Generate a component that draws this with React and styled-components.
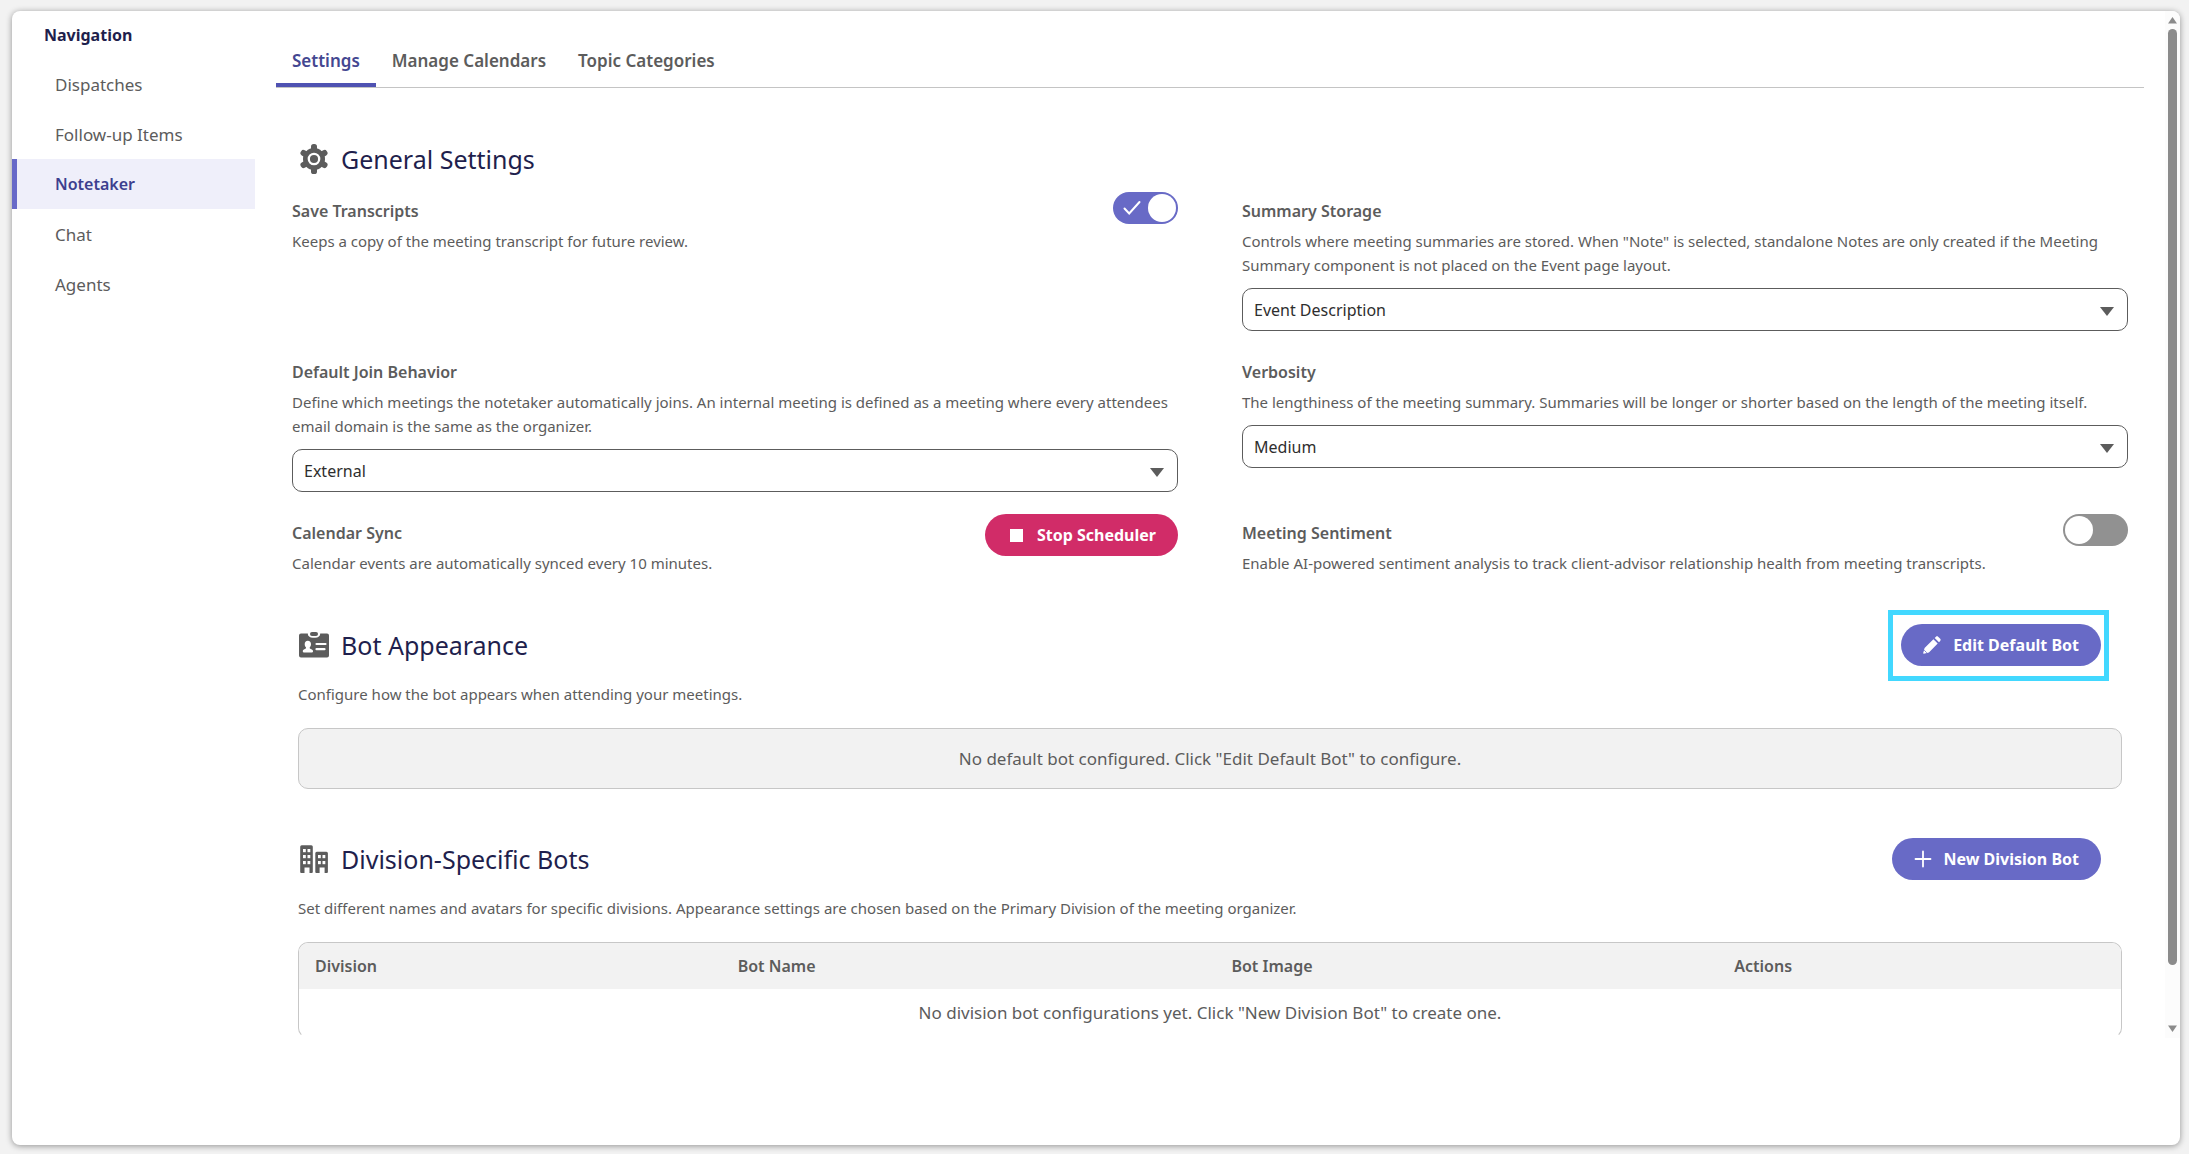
import React, { useState } from "react";
import styled, { createGlobalStyle, css } from "styled-components";

const navItems = ["Dispatches", "Follow-up Items", "Notetaker", "Chat", "Agents"];
const tabs = ["Settings", "Manage Calendars", "Topic Categories"];
const columns = [
    { name: "Division", width: "23.2%" },
    { name: "Bot Name", width: "27.1%" },
    { name: "Bot Image", width: "27.6%" },
    { name: "Actions", width: "22.1%" },
];

function GearIcon() {
    return (
        <svg width="30" height="30" viewBox="0 0 30 30" fill="#5c5c5c" aria-hidden="true">
            <circle cx="15" cy="15" r="11" />
            {[0, 60, 120].map(angle => (
                <rect key={angle} x="12" y="0" width="6" height="30" rx="2.6" transform={`rotate(${angle} 15 15)`} />
            ))}
            <circle cx="15" cy="15" r="5.2" stroke="#fff" strokeWidth="2.3" />
        </svg>
    );
}

function BadgeIcon() {
    return (
        <svg width="30" height="30" viewBox="0 1 30 30" aria-hidden="true">
            <path
                fill="#5c5c5c"
                d="M2 4.500h6.800a5 4 0 0 0 5 4.300h2.400a5 4 0 0 0 5-4.300H28a2 2 0 0 1 2 2v20a2 2 0 0 1-2 2H2a2 2 0 0 1-2-2v-20a2 2 0 0 1 2-2z"
            />
            <rect x="11" y="3" width="8" height="4" rx="2" fill="#5c5c5c" />
            <path
                fill="#fff"
                d="M8.800 11.800c2 0 3.200 1.500 3.200 3.400 0 1.300-.6 2.200-1.200 3-.3.600-.1 1.200.5 1.500 1.500.6 2.700 1.200 2.700 2.400v.5a.8.8 0 0 1-.8.800H4.600a.8.800 0 0 1-.8-.8v-.5c0-1.200 1.100-1.800 2.600-2.400.6-.3.800-.9.500-1.500-.7-.8-1.200-1.700-1.200-3 0-1.900 1.100-3.400 3.100-3.400z"
            />
            <path stroke="#fff" strokeWidth="2.2" strokeLinecap="round" d="M17.500 15h9M17.500 20.200h8" />
        </svg>
    );
}

function BuildingsIcon() {
    const windows = [
        [4, 5], [8.5, 5], [4, 11], [8.5, 11], [4, 17], [8.5, 17],
        [19, 11], [23.5, 11], [19, 17], [23.5, 17],
    ];
    return (
        <svg width="30" height="30" viewBox="0 0 30 30" aria-hidden="true">
            <path
                fill="#5c5c5c"
                d="M2.700 1.300h9.600A1.500 1.500 0 0 1 13.800 2.800V28a1 1 0 0 1-1 1h-2.300v-5.500h-5V29H2.200a1 1 0 0 1-1-1V2.800a1.500 1.500 0 0 1 1.500-1.500zM17.800 7.700h9.600a1.500 1.500 0 0 1 1.500 1.500V28a1 1 0 0 1-1 1h-2.300v-5.500h-5V29h-3.300a1 1 0 0 1-1-1V9.200a1.500 1.500 0 0 1 1.500-1.500z"
            />
            {windows.map(([x, y]) => (
                <rect key={`${x}-${y}`} x={x} y={y} width="2.800" height="3.200" fill="#fff" />
            ))}
        </svg>
    );
}

function PencilIcon() {
    return (
        <svg width="18" height="18" viewBox="0 0 18 18" fill="#fff" aria-hidden="true">
            <path d="M1.600 12.100L10.400 3.300l4.300 4.300-8.800 8.800L.9 17.800c-.4.100-.8-.3-.7-.700zM11.700 2l1.300-1.300c.6-.6 1.500-.6 2.100 0l2.100 2.100c.6.600.6 1.500 0 2.100L16 6.300z" />
            <path d="M1.200 14.200l2.600 2.600" stroke="#686ac6" strokeWidth="0.800" />
        </svg>
    );
}

function PlusIcon() {
    return (
        <svg width="18" height="18" viewBox="0 0 18 18" aria-hidden="true">
            <path d="M9 1.500v15M1.500 9h15" stroke="#fff" strokeWidth="1.800" strokeLinecap="round" />
        </svg>
    );
}

function StopIcon() {
    return (
        <svg width="18" height="18" viewBox="0 0 18 18" aria-hidden="true">
            <rect x="3" y="3" width="13" height="13" fill="#fff" />
        </svg>
    );
}

function Toggle({ id, defaultChecked }) {
    const [checked, setChecked] = useState(defaultChecked);

    return (
        <ToggleWrap>
            <ToggleInput id={id} type="checkbox" checked={checked} onChange={e => setChecked(e.target.checked)} />
            {checked && (
                <ToggleCheck width="18" height="16" viewBox="0 0 18 16" aria-hidden="true">
                    <path d="M1.500 8.500l4.700 5L16.500 2" fill="none" stroke="#fff" strokeWidth="2" strokeLinecap="round" />
                </ToggleCheck>
            )}
        </ToggleWrap>
    );
}

function SelectField({ id, options }) {
    return (
        <SelectWrap>
            <Select id={id}>
                {options.map(option => <option key={option}>{option}</option>)}
            </Select>
            <Caret width="14" height="9" viewBox="0 0 14 9" aria-hidden="true">
                <path d="M0 0h14L7 9z" fill="#5c5c5c" />
            </Caret>
        </SelectWrap>
    );
}

function Setting({ id, label, description, control, children }) {
    return (
        <Cell>
            <CellText>
                <Label htmlFor={id}>{label}</Label>
                <Description>{description}</Description>
                {children}
            </CellText>
            {control}
        </Cell>
    );
}

function App() {
    const [tab, setTab] = useState("Settings");

    return (
        <>
            <GlobalStyle />
            <Card>
                <Sidebar>
                    <NavTitle>Navigation</NavTitle>
                    {navItems.map(item => (
                        <NavLink href="#" key={item} $active={item === "Notetaker"}>{item}</NavLink>
                    ))}
                </Sidebar>

                <ScrollArea>
                    <Main>
                        <TabBar role="tablist">
                            {tabs.map(name => (
                                <Tab key={name} role="tab" aria-selected={tab === name} $active={tab === name} onClick={() => setTab(name)}>
                                    {name}
                                </Tab>
                            ))}
                        </TabBar>

                        <SectionHeader $first>
                            <GearIcon />
                            <SectionTitle>General Settings</SectionTitle>
                        </SectionHeader>

                        <SettingsGrid>
                            <Setting
                                id="save-transcripts"
                                label="Save Transcripts"
                                description="Keeps a copy of the meeting transcript for future review."
                                control={<Toggle id="save-transcripts" defaultChecked />}
                            />
                            <Setting
                                id="summary-storage"
                                label="Summary Storage"
                                description={'Controls where meeting summaries are stored. When "Note" is selected, standalone Notes are only created if the Meeting Summary component is not placed on the Event page layout.'}
                            >
                                <SelectField id="summary-storage" options={["Event Description", "Note"]} />
                            </Setting>
                            <Setting
                                id="join-behavior"
                                label="Default Join Behavior"
                                description="Define which meetings the notetaker automatically joins. An internal meeting is defined as a meeting where every attendees email domain is the same as the organizer."
                            >
                                <SelectField id="join-behavior" options={["External", "Internal", "All"]} />
                            </Setting>
                            <Setting
                                id="verbosity"
                                label="Verbosity"
                                description="The lengthiness of the meeting summary. Summaries will be longer or shorter based on the length of the meeting itself."
                            >
                                <SelectField id="verbosity" options={["Medium", "Short", "Long"]} />
                            </Setting>
                            <Setting
                                id="calendar-sync"
                                label="Calendar Sync"
                                description="Calendar events are automatically synced every 10 minutes."
                                control={<Button id="calendar-sync" $danger><StopIcon />Stop Scheduler</Button>}
                            />
                            <Setting
                                id="meeting-sentiment"
                                label="Meeting Sentiment"
                                description="Enable AI-powered sentiment analysis to track client-advisor relationship health from meeting transcripts."
                                control={<Toggle id="meeting-sentiment" defaultChecked={false} />}
                            />
                        </SettingsGrid>

                        <Section>
                            <SectionHeader>
                                <BadgeIcon />
                                <SectionTitle>Bot Appearance</SectionTitle>
                                <Highlighted>
                                    <Button><PencilIcon />Edit Default Bot</Button>
                                </Highlighted>
                            </SectionHeader>
                            <SectionText>Configure how the bot appears when attending your meetings.</SectionText>
                            <EmptyBox>No default bot configured. Click "Edit Default Bot" to configure.</EmptyBox>
                        </Section>

                        <Section>
                            <SectionHeader>
                                <BuildingsIcon />
                                <SectionTitle>Division-Specific Bots</SectionTitle>
                                <Button><PlusIcon />New Division Bot</Button>
                            </SectionHeader>
                            <SectionText>
                                Set different names and avatars for specific divisions. Appearance settings are chosen based on the Primary Division of the meeting organizer.
                            </SectionText>
                            <TableFrame>
                                <Table>
                                    <thead>
                                        <tr>
                                            {columns.map(({ name, width }) => <th key={name} scope="col" width={width}>{name}</th>)}
                                        </tr>
                                    </thead>
                                    <tbody>
                                        <tr>
                                            <td colSpan={4}>No division bot configurations yet. Click "New Division Bot" to create one.</td>
                                        </tr>
                                    </tbody>
                                </Table>
                            </TableFrame>
                        </Section>
                    </Main>

                    <ScrollRail aria-hidden="true">
                        <svg width="9" height="7" viewBox="0 0 9 7"><path d="M4.500 0L9 6.500H0z" fill="#8b8b8b" /></svg>
                        <ScrollTrack><ScrollThumb /></ScrollTrack>
                        <svg width="9" height="7" viewBox="0 0 9 7"><path d="M0 .5h9L4.500 7z" fill="#8b8b8b" /></svg>
                    </ScrollRail>
                </ScrollArea>
            </Card>
        </>
    );
}

export default App;

const GlobalStyle = createGlobalStyle`
    * {
        box-sizing: border-box;
    }

    body {
        margin: 0;
        background: #f2f2f2;
        color: #5c5c5c;
        font-family: 'Noto Sans', 'Open Sans', sans-serif;
        font-size: 16px;
    }

    button, select {
        font-family: inherit;
        font-size: inherit;
    }
`;

const Card = styled.div`
    display: flex;
    align-items: flex-start;
    min-height: calc(100vh - 20px);
    margin: 11px 9px 9px 12px;
    background: #fff;
    border-radius: 8px;
    box-shadow: 0 1px 6px rgba(0, 0, 0, 0.4);
`;

const Sidebar = styled.nav`
    display: flex;
    flex-direction: column;
    flex: 0 0 243px;
`;

const NavTitle = styled.h2`
    margin: 0;
    padding: 12px 32px;
    color: #1f1f4d;
    font-size: 16px;
    line-height: 24px;
    font-weight: 700;
`;

const NavLink = styled.a`
    padding: 1px 38px 0;
    border-left: 5px solid ${({ $active }) => ($active ? "#6769c8" : "transparent")};
    background: ${({ $active }) => ($active ? "#efeffa" : "transparent")};
    color: ${({ $active }) => ($active ? "#3d3f8f" : "#5c5c5c")};
    font-size: ${({ $active }) => ($active ? 16 : 17)}px;
    font-weight: ${({ $active }) => ($active ? 600 : 400)};
    line-height: 49px;
    text-decoration: none;
`;

const ScrollArea = styled.div`
    display: flex;
    flex: 1;
    min-width: 0;
`;

const Main = styled.main`
    flex: 1;
    min-width: 0;
    padding: 26px 21px 0;
`;

const TabBar = styled.div`
    display: flex;
    border-bottom: 1px solid #c4c4c4;
`;

const Tab = styled.button`
    padding: 11px 16px 9px;
    border: 0;
    border-bottom: 4px solid ${({ $active }) => ($active ? "#4f52b2" : "transparent")};
    background: none;
    color: ${({ $active }) => ($active ? "#444791" : "#5c5c5c")};
    font-size: 17px;
    font-weight: 600;
    line-height: 26px;
`;

const SectionHeader = styled.div`
    display: flex;
    align-items: center;
    gap: 12px;
    height: 42px;
    padding: 0 21px 0 1px;

    ${({ $first }) => $first && css`
        margin: 50px 22px 12px;
    `}
`;

const SectionTitle = styled.h2`
    flex: 1;
    margin: 0;
    color: #1f1f4d;
    font-size: 25px;
    line-height: 36px;
    font-weight: 400;
`;

const SettingsGrid = styled.div`
    display: grid;
    grid-template-columns: 1fr 1fr;
    gap: 22px 64px;
    padding: 0 16px;
`;

const Cell = styled.div`
    display: flex;
    align-items: flex-start;
    justify-content: space-between;
`;

const CellText = styled.div`
    flex: 1;
    padding-top: 7px;
`;

const Label = styled.label`
    display: block;
    margin-bottom: 6px;
    font-weight: 600;
    line-height: 24px;
`;

const Description = styled.p`
    margin: 0;
    font-size: 15px;
    line-height: 24px;
`;

const SelectWrap = styled.div`
    position: relative;
    margin-top: 11px;
`;

const Select = styled.select`
    display: block;
    width: 100%;
    height: 43px;
    padding: 0 11px;
    border: 1px solid #5c5c5c;
    border-radius: 10px;
    background: #fff;
    color: #2e2e2e;
    appearance: none;
`;

const Caret = styled.svg`
    position: absolute;
    top: 19px;
    right: 14px;
    pointer-events: none;
`;

const ToggleWrap = styled.span`
    position: relative;
    display: flex;
`;

const ToggleInput = styled.input`
    display: flex;
    align-items: center;
    width: 65px;
    height: 32px;
    margin: 0;
    padding: 0 2px;
    border-radius: 16px;
    background: #919191;
    appearance: none;

    &::before {
        content: "";
        width: 28px;
        height: 28px;
        border-radius: 50%;
        background: #fff;
    }

    &:checked {
        justify-content: flex-end;
        background: #686ac6;
    }
`;

const ToggleCheck = styled.svg`
    position: absolute;
    top: 8px;
    left: 10px;
    pointer-events: none;
`;

const Button = styled.button`
    display: flex;
    align-items: center;
    gap: 12px;
    height: 42px;
    padding: 0 22px;
    border: 0;
    border-radius: 21px;
    background: ${({ $danger }) => ($danger ? "#d12c68" : "#686ac6")};
    color: #fff;
    font-weight: 700;
    white-space: nowrap;
`;

const Highlighted = styled.div`
    position: relative;

    &::after {
        content: "";
        position: absolute;
        inset: -14px -8px -15px -13px;
        border: 5px solid #42d8ff;
        pointer-events: none;
    }
`;

const Section = styled.section`
    margin: 49px 22px 0;
`;

const SectionText = styled.p`
    margin: 16px 0 22px;
    font-size: 15px;
    line-height: 24px;
`;

const EmptyBox = styled.div`
    padding: 17px;
    border: 1px solid #c7c7c7;
    border-radius: 10px;
    background: #f2f2f2;
    font-size: 17px;
    line-height: 25px;
    text-align: center;
`;

const TableFrame = styled.div`
    overflow: hidden;
    border: 1px solid #c7c7c7;
    border-bottom-color: transparent;
    border-radius: 10px;
`;

const Table = styled.table`
    width: 100%;
    border-collapse: collapse;
    table-layout: fixed;

    th {
        padding: 1px 16px 0;
        background: #f2f2f2;
        font-weight: 600;
        line-height: 45px;
        text-align: left;
    }

    td {
        padding: 0;
        font-size: 17px;
        line-height: 48px;
        text-align: center;
    }
`;

const ScrollRail = styled.div`
    display: flex;
    flex-direction: column;
    align-items: center;
    flex: 0 0 15px;
    padding: 6px 0;
    border-top-right-radius: 8px;
    background: #fcfcfc;
`;

const ScrollTrack = styled.div`
    flex: 1;
    display: flex;
    width: 9px;
    padding: 5px 0 60px;
`;

const ScrollThumb = styled.div`
    flex: 1;
    border-radius: 5px;
    background: #8b8b8b;
`;
